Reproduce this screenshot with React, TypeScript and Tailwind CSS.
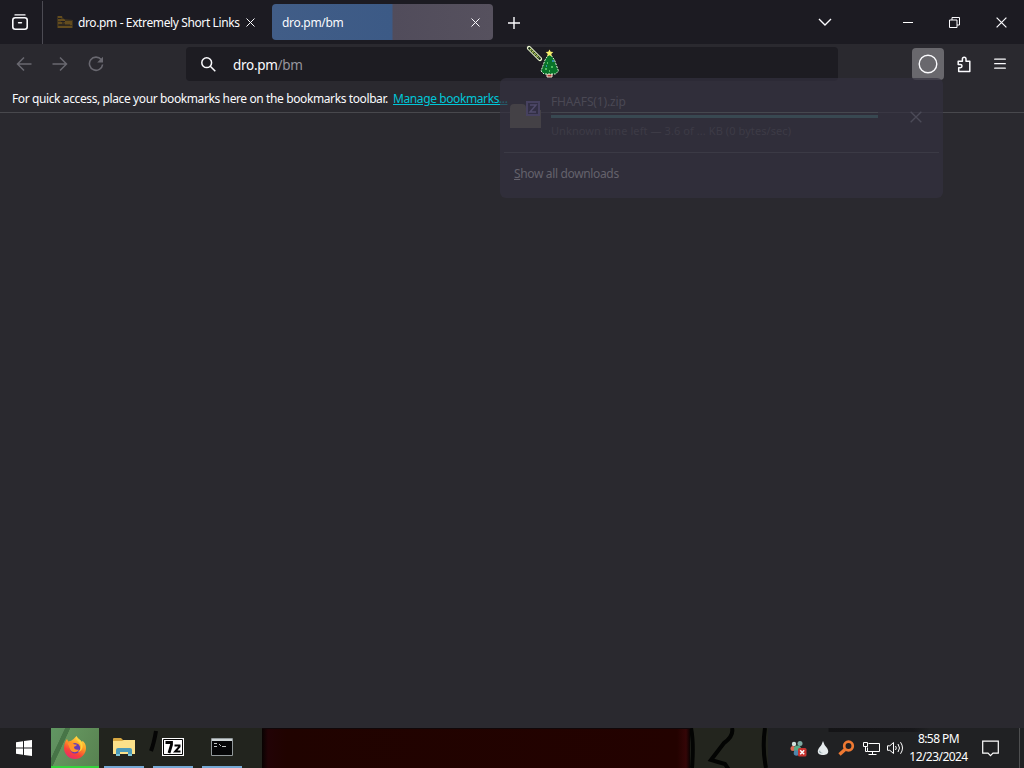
import React from 'react';
import clsx from 'clsx';

function CloseIcon({ className = 'w-[9px] h-[9px]' }: { className?: string }) {
  return (
    <svg viewBox="0 0 9 9" className={clsx('shrink-0', className)} fill="none" stroke="currentColor" strokeWidth="1">
      <path d="M.5.5l8 8M8.5.5l-8 8" />
    </svg>
  );
}

function TabStrip() {
  return (
    <div className="h-11 flex items-center bg-[#1c1b22] text-[#fbfbfe]">
      <div className="w-[43px] h-[43px] pl-3 flex items-center border-r border-[#4c4b53]">
        <svg viewBox="0 0 16 16" className="w-4 h-4" fill="none" stroke="currentColor" strokeWidth="1.6" strokeLinecap="round">
          <path d="M3 .9h10" strokeWidth="1.3" />
          <rect x=".8" y="3.7" width="14.4" height="11.5" rx="2.4" />
          <path d="M6.6 8.7h2.8" />
        </svg>
      </div>

      {/* Background tab */}
      <div className="w-[229px] flex items-center pl-[14px]">
        <svg viewBox="0 0 16 14" className="w-4 h-[14px] mr-[5px] shrink-0">
          <path fill="#3d321f" d="M0 1h5l2 3 9 1v8H0z" />
          <path stroke="#70551f" strokeWidth="1.3" fill="none" d="M1 2h4M1 5h6l1 2h7M1 8h4M8 9h7M1 12h14" />
          <path stroke="#211e22" fill="none" d="M1 3.5h3M4 6.5h4M2 10h11" />
        </svg>
        <span className="w-[163px] pt-[2px] text-xs whitespace-nowrap tracking-[-0.38px]">dro.pm - Extremely Short Links</span>
        <CloseIcon className="w-[9px] h-[9px] ml-[5px]" />
      </div>

      {/* Selected tab, half loaded */}
      <div className="w-[221px] h-9 rounded bg-[linear-gradient(90deg,#415d87_0,#3c5a86_120px,#514c5b_121px,#56515e_100%)] flex items-center justify-between pl-[10px] pr-[13px]">
        <span className="pt-[2px] text-xs tracking-[-0.3px]">dro.pm/bm</span>
        <CloseIcon />
      </div>

      <svg viewBox="0 0 12 12" className="w-3 h-3 ml-[15px] mt-px" stroke="currentColor" strokeWidth="1.4">
        <path d="M6 0v12M0 6h12" />
      </svg>

      <div className="ml-auto flex items-center">
        <svg viewBox="0 0 14 8" className="w-[14px] h-2 mr-[71px]" fill="none" stroke="currentColor" strokeWidth="1.4">
          <path d="M1 1l6 6 6-6" />
        </svg>
        <div className="w-[10px] h-px bg-white mr-9" />
        <svg viewBox="0 0 11 11" className="w-[11px] h-[11px] mr-9" fill="none" stroke="currentColor">
          <path d="M.5 3h7.5v7.5H.5zM3 3V.5h7.5V8H8" />
        </svg>
        <CloseIcon className="w-[11px] h-[11px] mr-[17px]" />
      </div>
    </div>
  );
}

function NavBar() {
  return (
    <div className="h-10 flex items-center text-[#fbfbfe]">
      <div className="w-[186px] flex items-center pl-4 gap-5 text-[#696870]">
        <svg viewBox="0 0 16 16" className="w-4 h-4" fill="none" stroke="currentColor" strokeWidth="1.5">
          <path d="M15.5 8H1.5M8 1.5L1.5 8 8 14.5" />
        </svg>
        <svg viewBox="0 0 16 16" className="w-4 h-4" fill="none" stroke="currentColor" strokeWidth="1.5">
          <path d="M.5 8h14M8 1.5L14.5 8 8 14.5" />
        </svg>
        <svg viewBox="0 0 16 16" className="w-4 h-4" fill="none" stroke="currentColor" strokeWidth="1.6">
          <path d="M13.2 3.6A6.6 6.6 0 1 0 14.6 8.5" />
          <path d="M15 .7v5.8H9.2z" fill="currentColor" stroke="none" />
        </svg>
      </div>
      <div className="w-[652px] h-[34px] rounded bg-[#1d1c22] flex items-center pl-[15px] pt-px">
        <svg viewBox="0 0 15 15" className="w-[15px] h-[15px]" fill="none" stroke="currentColor" strokeWidth="1.5">
          <circle cx="5.7" cy="5.7" r="4.9" />
          <path d="M9.3 9.3l5 5" />
        </svg>
        <span className="ml-[17px] pt-px text-[13.5px] tracking-[-0.3px]">
          dro.pm<span className="text-[#96959e]">/bm</span>
        </span>
      </div>
      <div className="ml-auto flex items-center pr-[18px]">
        <div className="w-8 h-8 rounded bg-[#69686d] flex items-center justify-center">
          <svg viewBox="0 0 20 20" className="w-5 h-5" fill="none" stroke="currentColor" strokeWidth="1.4">
            <circle cx="10" cy="10" r="8.8" />
          </svg>
        </div>
        <svg viewBox="0 0 15 17" className="w-[15px] h-[17px] ml-[13px] mr-px" fill="none" stroke="currentColor" strokeWidth="1.5" strokeLinejoin="round">
          <path d="M1.7 15.6v-3.8h1.6a1.7 1.7 0 0 0 0-3.4H1.2V5.2h4.2V3.1a1.8 1.8 0 0 1 3.6 0v2.1h3.8v10.4z" />
        </svg>
        <svg viewBox="0 0 12 12" className="w-3 h-3 ml-[21px]" stroke="currentColor" strokeWidth="1.3" strokeLinecap="round">
          <path d="M.7 1.2h10.6M.7 5.7h10.6M.7 10.2h10.6" />
        </svg>
      </div>
    </div>
  );
}

function BookmarksBar() {
  return (
    <div className="h-[29px] pl-3 pt-[2px] flex items-center border-b border-[#48484d] text-xs text-[#fbfbfe] whitespace-nowrap">
      <span className="w-[381px] tracking-[-0.39px]">For quick access, place your bookmarks here on the bookmarks toolbar.</span>
      <a className="text-[#00c6d8] underline tracking-[-0.4px]">Manage bookmarks...</a>
    </div>
  );
}

// Downloads panel, caught mid fade
function DownloadsPanel() {
  return (
    <div className="absolute left-[500px] top-[78px] w-[443px] h-[120px] rounded-md bg-[#33313e]/70 flex flex-col">
      <div className="flex h-[75px] mx-1 border-b border-[#3b3a45]">
        <svg viewBox="0 0 32 28" className="w-8 h-7 ml-[6px] mt-[23px] shrink-0">
          <path fill="#444146" d="M0 7q0-4 4-4h8q4 0 4 4v2h15v18H0z" />
          <rect x="17" y="1" width="12" height="13" fill="#322f44" stroke="#46415f" strokeWidth="2" />
          <path d="M20 4h6l-6 7h6" fill="none" stroke="#504b6b" strokeWidth="1.5" />
        </svg>
        <div className="w-[327px] ml-[9px] pt-[15px] text-xs leading-[17px] text-[#4a4854] whitespace-nowrap">
          <div className="tracking-[-0.15px]">FHAAFS(1).zip</div>
          <div className="h-px mt-[2px] bg-[#45484f]" />
          <div className="h-[3px] mt-[2px] bg-[#384851]" />
          <div className="mt-[4px] text-[11px] text-[#3d3b46] tracking-[0.08px]">Unknown time left — 3.6 of ... KB (0 bytes/sec)</div>
        </div>
        <CloseIcon className="w-3 h-3 ml-8 mt-[33px] text-[#4c4b58]" />
      </div>
      <div className="pl-[14px] pt-[12px] text-xs leading-[18px] tracking-[-0.35px] text-[#64626c]">
        <span className="underline">S</span>how all downloads
      </div>
    </div>
  );
}

function TreeCursor() {
  return (
    <svg viewBox="0 0 34 34" className="absolute left-[526px] top-[45px] w-[34px] h-[34px]">
      <path d="M3 3l11 11" stroke="#f5ffd8" strokeWidth="4.2" strokeLinecap="round" />
      <path d="M3.3 3.3l10.4 10.4" stroke="#17291b" strokeWidth="2.4" strokeLinecap="round" />
      <path d="M4 4l9 9" stroke="#b9ce55" strokeWidth="1.5" strokeDasharray="2 1" />
      <path d="M21 29h5v3h-5z" fill="#a93d35" stroke="#eadfce" />
      <path d="M23.5 8l5 7 4 11-3 3H18l-3-3 4-11z" fill="#087329" stroke="#dcf5d5" strokeWidth="1" strokeDasharray="2 1" />
      <path d="M23.5 4.5l1.2 2.3 2.6.3-2 1.8.5 2.6-2.3-1.2-2.3 1.2.5-2.6-2-1.8 2.6-.3z" fill="#f8ef6c" />
      <path d="M21 18h1M25 22h2M19 24h2M23 26h1" stroke="#6bd873" strokeWidth="1.5" />
      <path d="M26 16h2M20 21h1" stroke="#3e9bd4" strokeWidth="1.5" />
    </svg>
  );
}

function FirefoxIcon() {
  return (
    <svg viewBox="0 0 24 24" className="w-6 h-6">
      <defs>
        <linearGradient id="fire" x1=".8" y1="0" x2=".3" y2="1">
          <stop offset="0" stopColor="#ffe74a" />
          <stop offset=".4" stopColor="#ff9c24" />
          <stop offset=".72" stopColor="#fa4437" />
          <stop offset="1" stopColor="#e52871" />
        </linearGradient>
      </defs>
      <path fill="url(#fire)" d="M13.5 1c1 3 4 3.4 5.4 6.3l.7-1.5C21.7 7.5 23 10 23 13a11 11 0 0 1-22 0C1 9.4 2 6.3 4 4l1.2 2.5 3-.7C9.3 5 11 3.8 13.5 1z" />
      <circle cx="12" cy="13.2" r="5.2" fill="#663bb7" />
      <path fill="#ff932a" d="M4.5 8.5c3-2 5.5-.8 6.5.8l3 .5c-.5 1.5-2.5 1.4-3 2.3-.2 2 2.5 3.4 5 2.4-1 3-6 4-8.5.8C6 13 6.5 11 4.5 8.5z" />
      <path fill="#ffd23d" d="M13.5 1c-2 4.5 3.5 5.3 4.2 9.5.5 3-1 5.5-3 6.7 4-.7 6.3-5.2 4.2-9.9C17.5 4.4 14.5 4 13.5 1z" />
    </svg>
  );
}

function TaskButton({ children }: { children: React.ReactNode }) {
  return (
    <div className="w-10 h-10 mr-[9px] border-b-2 border-[#76a9d5] flex items-center justify-center">{children}</div>
  );
}

function TrayIcons() {
  return (
    <div className="flex items-center text-white">
      <svg viewBox="0 0 17 17" className="w-[17px] h-[17px]">
        <circle cx="4" cy="4" r="2.2" fill="#d0e2dd" />
        <circle cx="10" cy="3.5" r="2.5" fill="#7daca4" />
        <circle cx="3" cy="8.5" r="2.5" fill="#dd6b55" />
        <circle cx="7.5" cy="9" r="3.6" fill="#55a886" />
        <circle cx="6.5" cy="13" r="2.8" fill="#4f87ac" />
        <rect x="8" y="8" width="8.5" height="8.5" rx="1.5" fill="#c83430" />
        <path d="M10.2 10.2l4 4M14.2 10.2l-4 4" stroke="#fff" strokeWidth="1.5" />
      </svg>
      <svg viewBox="0 0 12 16" className="w-3 h-4 ml-[10px]">
        <path fill="#e6ebed" d="M6 1q1 4 4 7c3 5 0 7-4 7s-7-2-4-7q3-3 4-7z" />
        <path fill="#8a9fa5" d="M3 10q0 3 3 3-2 1-4-1z" />
      </svg>
      <svg viewBox="0 0 17 17" className="w-[17px] h-[17px] ml-[9px]" fill="none" stroke="#ef7932">
        <circle cx="10.5" cy="6" r="4.3" strokeWidth="2.7" />
        <path d="M7 9.5l-5.5 5" strokeWidth="3.4" />
      </svg>
      <svg viewBox="0 0 17 15" className="w-[17px] h-[15px] ml-[8px]" fill="none" stroke="currentColor">
        <path d="M5.5 2.5h11v8h-12v-4M9.5 10.5v3M5.5 13.5h8M.5 1.5h4v4h-4zM2.5 5.5v5h2" />
      </svg>
      <svg viewBox="0 0 17 14" className="w-[17px] h-[14px] ml-[7px]" fill="none" stroke="currentColor">
        <path d="M.5 4.8h2.3L6.5 1.5v11L2.8 9.3H.5zM8.5 5q1.6 2 0 4M11 3q3 4 0 8M13.5 1.2q4 5.8 0 11.6" />
      </svg>
    </div>
  );
}

function Taskbar() {
  return (
    <div className="h-10 flex overflow-hidden bg-[#22241e]">
      <div className="w-[51px] flex items-center pl-4 bg-[#202022]">
        <svg viewBox="0 0 16 16" className="w-4 h-4" fill="#fff">
          <path d="M0 2.2l7-1v6.3H0zM8 1.1L16 0v7.5H8zM0 8.5h7v6.3l-7-1zM8 8.5h8V16l-8-1.1z" />
        </svg>
      </div>
      <div className="w-12 mr-[5px] border-b-2 border-[#35d33d] flex items-center justify-center bg-[linear-gradient(115deg,#609762_0,#60905f_21%,#477547_22%,#477547_29%,#64955e_30%,#588251_100%)]">
        <FirefoxIcon />
      </div>
      <TaskButton>
        <svg viewBox="0 0 22 20" className="w-[22px] h-5">
          <path fill="#d7a842" d="M0 2q0-1 1-1h7l2 2h11v4H0z" />
          <path fill="#fbe18a" d="M0 4h9l2-1h11v14H0z" />
          <path fill="#4c9bb9" d="M3 19v-6q0-2 2-2h12q2 0 2 2v6h-4v-4H7v4z" />
          <path fill="#80c5d7" d="M3 17h4v2H3zM15 17h4v2h-4z" />
        </svg>
      </TaskButton>
      <TaskButton>
        <svg viewBox="0 0 22 18" className="w-[22px] h-[18px]" fill="none" stroke="#050505">
          <path fill="#fff" stroke="none" d="M0 0h22v18H0z" />
          <path d="M1.5 1.5h19v15h-19z" />
          <path d="M3.5 4.5h6v2.2L7 15" strokeWidth="2.8" />
          <path d="M12.5 7.5h5v1.2l-4.3 4.8h5.3" strokeWidth="2" />
        </svg>
        <svg viewBox="0 0 10 32" className="absolute left-[148px] bottom-[6px] w-[10px] h-8 overflow-visible">
          <path d="M8 0Q6 12 3 20" transform="translate(0 1)" fill="none" stroke="#050505" strokeWidth="4" />
        </svg>
      </TaskButton>
      <TaskButton>
        <svg viewBox="0 0 22 18" className="w-[22px] h-[18px]">
          <path fill="#050607" stroke="#92999b" d="M.5.5h21v17H.5z" />
          <path fill="#cdd4d5" d="M1 1h20v2H1z" />
          <path d="M3 5.5h3M3 8.5h3M8 6l2 2M11 8.5h4" stroke="#c0c3c3" fill="none" />
        </svg>
      </TaskButton>
      <div className="w-[11px]" />

      {/* Wallpaper seen through the bar */}
      <div className="w-[428px] bg-[linear-gradient(90deg,#080202_0,#220306_6px,#200300_24px,#230200_415px,#340607_424px,#0b0202_428px)] border-t border-[#100709]" />
      <svg viewBox="0 0 78 40" className="w-[78px] h-10">
        <path fill="#23251e" d="M0 0h78v40H0z" />
        <path d="M1 0q3 15 1 40M42 0q2 8-8 15L21 32l14 4 4 6M75 0q-3 20 1 40" fill="none" stroke="#030403" strokeWidth="4" />
      </svg>
      <div className="flex-1 flex items-center bg-[#202123] bg-[linear-gradient(90deg,transparent_60px,#141416_61px,#17171a_145px,transparent_162px)] bg-[length:100%_4px] bg-no-repeat pl-[22px]">
        <TrayIcons />
        <div className="w-[69px] text-center text-xs leading-[18px] tracking-[-0.55px] text-white whitespace-nowrap">
          <div>8:58 PM</div>
          <div>12/23/2024</div>
        </div>
        <svg viewBox="0 0 17 17" className="w-[17px] h-[17px] ml-[9px]" fill="none" stroke="#fff" strokeWidth="1.2">
          <path d="M.7 1.2h15.6v12H11l-2.5 2.5L6 13.2H.7z" />
        </svg>
        <div className="w-px h-10 ml-auto mr-1 bg-[#4e4f50]" />
      </div>
    </div>
  );
}

export default function App() {
  return (
    <div className="relative w-[1024px] h-[768px] overflow-hidden flex flex-col bg-[#2a292f] font-['Noto_Sans','Open_Sans',sans-serif] select-none">
      <TabStrip />
      <NavBar />
      <BookmarksBar />
      <main className="flex-1" />
      <Taskbar />
      <DownloadsPanel />
      <TreeCursor />
    </div>
  );
}
